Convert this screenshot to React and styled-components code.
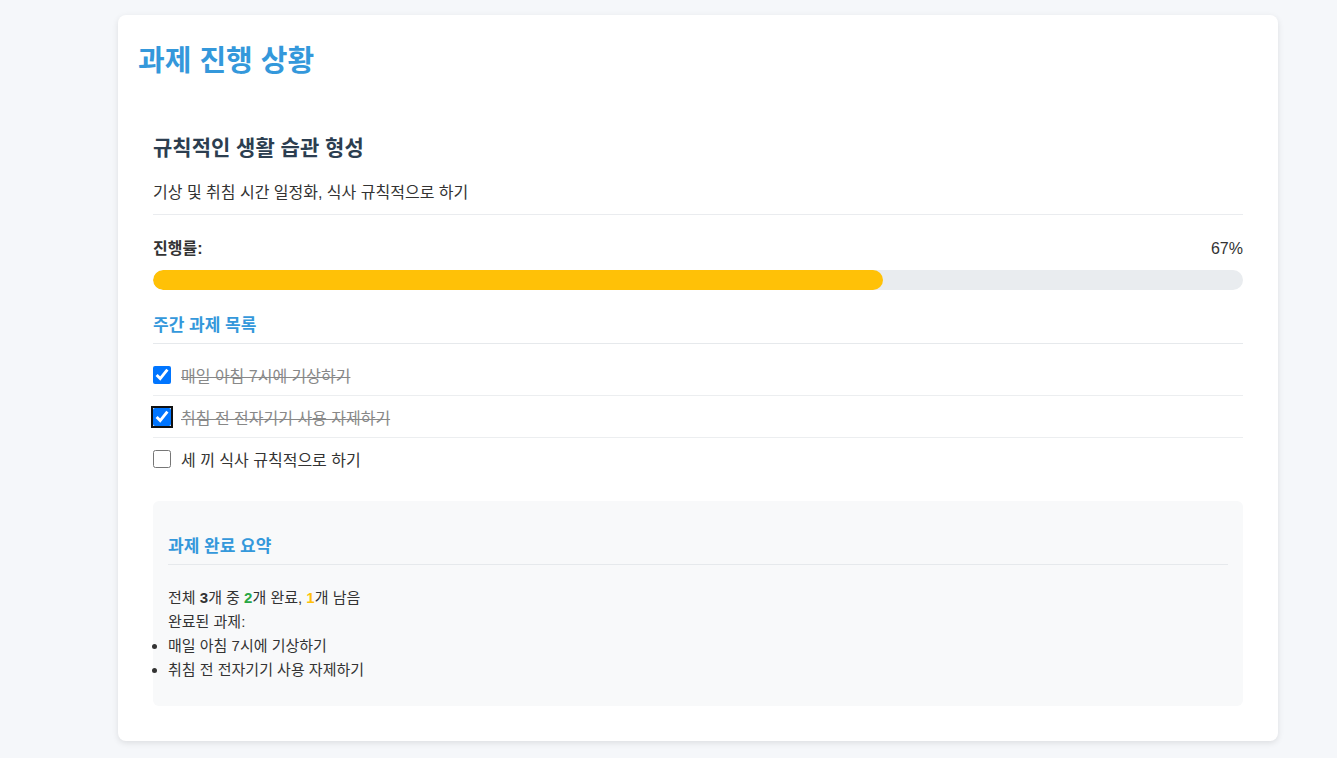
import React, { useState } from "react";
import styled, { createGlobalStyle } from "styled-components";

const GlobalStyle = createGlobalStyle`
  body {
    margin: 0;
    background-color: #f5f7fa;
    font-family: "Liberation Sans", "Noto Sans CJK KR", sans-serif;
    color: #333;
  }
`;

const Page = styled.div`
  padding: 15px 59px 16px 118px;
`;

const Card = styled.div`
  background-color: #ffffff;
  border-radius: 8px;
  box-shadow: 0 2px 6px rgba(0, 0, 0, 0.1);
  padding: 20px;
`;

const PageTitle = styled.h1`
  margin: 0;
  padding-top: 2px;
  font-size: 29px;
  line-height: 48px;
  font-weight: bold;
  color: #3498db;
`;

const Section = styled.div`
  margin-top: 30px;
  padding: 15px;
`;

const GoalTitle = styled.h2`
  margin: 0;
  font-size: 21px;
  line-height: 36px;
  font-weight: bold;
  color: #2c3e50;
`;

const GoalDesc = styled.p`
  margin: 16px 0 0;
  padding-bottom: 10px;
  font-size: 16px;
  line-height: 22px;
  border-bottom: 1px solid #eaecef;
`;

const ProgressHeader = styled.div`
  display: flex;
  justify-content: space-between;
  align-items: center;
  margin-top: 22px;
  font-size: 16px;
  line-height: 24px;
`;

const ProgressLabel = styled.span`
  font-weight: bold;
`;

const ProgressTrack = styled.div`
  margin-top: 9px;
  height: 20px;
  border-radius: 10px;
  background-color: #e9ecef;
  overflow: hidden;
`;

const ProgressFill = styled.div`
  height: 100%;
  border-radius: 10px;
  background-color: #ffc107;
`;

const SubTitle = styled.h3`
  margin: ${(p) => p.$top || 23}px 0 0;
  padding-bottom: 4px;
  font-size: 17px;
  line-height: 26px;
  font-weight: bold;
  color: #3498db;
  border-bottom: 1px solid #e6e9ec;
`;

const TaskList = styled.div`
  margin-top: 10px;
`;

const TaskRow = styled.label`
  display: flex;
  align-items: center;
  gap: 10px;
  height: 41px;
  font-size: 16px;
  border-bottom: ${(p) => (p.$last ? "none" : "1px solid #eceef0")};
  cursor: pointer;
`;

const CheckBox = styled.input`
  width: 18px;
  height: 18px;
  margin: 0;
  accent-color: #0075ff;
  outline: ${(p) => (p.$focused ? "2px solid #111" : "none")};
  outline-offset: 0;
`;

const TaskText = styled.span`
  color: ${(p) => (p.$done ? "#888" : "#333")};
  text-decoration: ${(p) => (p.$done ? "line-through" : "none")};
`;

const SummaryBox = styled.div`
  margin-top: 22px;
  padding: 15px 15px 24px;
  border-radius: 6px;
  background-color: #f8f9fa;
`;

const SummaryText = styled.div`
  margin-top: 21px;
  font-size: 15px;
  line-height: 24px;
`;

const Count = styled.strong`
  color: ${(p) => p.$color || "#333"};
`;

const DoneList = styled.ul`
  margin: 0;
  padding-left: 0;
`;

export default function App() {
  const [tasks, setTasks] = useState([
    { id: 1, text: "매일 아침 7시에 기상하기", done: true },
    { id: 2, text: "취침 전 전자기기 사용 자제하기", done: true },
    { id: 3, text: "세 끼 식사 규칙적으로 하기", done: false },
  ]);

  const toggle = (id) =>
    setTasks(tasks.map((t) => (t.id === id ? { ...t, done: !t.done } : t)));

  const doneTasks = tasks.filter((t) => t.done);
  const percent = Math.round((doneTasks.length / tasks.length) * 100);

  return (
    <>
      <GlobalStyle />
      <Page>
        <Card>
          <PageTitle>과제 진행 상황</PageTitle>
          <Section>
            <GoalTitle>규칙적인 생활 습관 형성</GoalTitle>
            <GoalDesc>기상 및 취침 시간 일정화, 식사 규칙적으로 하기</GoalDesc>

            <ProgressHeader>
              <ProgressLabel>진행률:</ProgressLabel>
              <span>{percent}%</span>
            </ProgressHeader>
            <ProgressTrack>
              <ProgressFill style={{ width: `${percent}%` }} />
            </ProgressTrack>

            <SubTitle>주간 과제 목록</SubTitle>
            <TaskList>
              {tasks.map((t, i) => (
                <TaskRow key={t.id} $last={i === tasks.length - 1}>
                  <CheckBox
                    type="checkbox"
                    checked={t.done}
                    onChange={() => toggle(t.id)}
                    $focused={t.id === 2}
                  />
                  <TaskText $done={t.done}>{t.text}</TaskText>
                </TaskRow>
              ))}
            </TaskList>

            <SummaryBox>
              <SubTitle $top={18}>과제 완료 요약</SubTitle>
              <SummaryText>
                <div>
                  전체 <Count>{tasks.length}</Count>개 중{" "}
                  <Count $color="#28a745">{doneTasks.length}</Count>개 완료,{" "}
                  <Count $color="#ffc107">{tasks.length - doneTasks.length}</Count>개 남음
                </div>
                <div>완료된 과제:</div>
                <DoneList>
                  {doneTasks.map((t) => (
                    <li key={t.id}>{t.text}</li>
                  ))}
                </DoneList>
              </SummaryText>
            </SummaryBox>
          </Section>
        </Card>
      </Page>
    </>
  );
}
